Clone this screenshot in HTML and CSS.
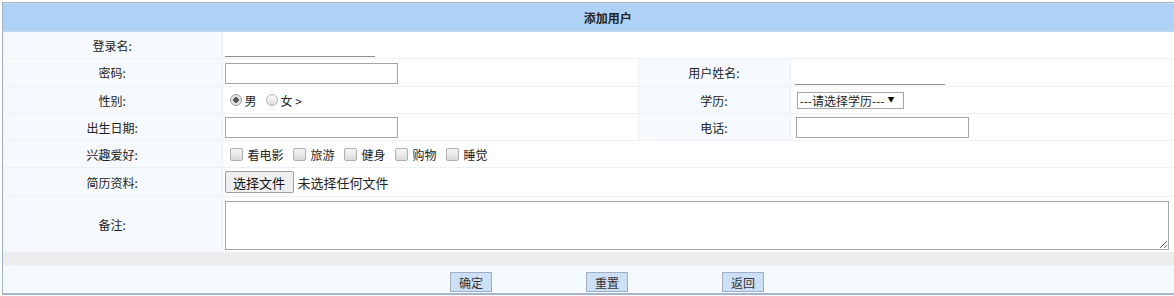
FILE: index.html
```html
<!DOCTYPE html>
<html lang="zh">
<head>
<meta charset="utf-8">
<title>添加用户</title>
<link rel="stylesheet" href="styles.css">
</head>
<body>
<div class="frame">
<table class="form">
  <colgroup>
    <col class="c1"><col class="c2"><col class="c3"><col class="c4">
  </colgroup>
  <tr class="head"><th colspan="4">添加用户</th></tr>
  <tr class="r1">
    <td class="lab">登录名:</td>
    <td class="val" colspan="3"><input class="line" type="text"></td>
  </tr>
  <tr class="r2">
    <td class="lab">密码:</td>
    <td class="val"><input class="box" type="password"></td>
    <td class="lab">用户姓名:</td>
    <td class="val right"><input class="line" type="text"></td>
  </tr>
  <tr class="r3">
    <td class="lab">性别:</td>
    <td class="val">
      <span class="opts">
        <label class="opt"><input type="radio" name="sex" checked>男</label>
        <label class="opt"><input type="radio" name="sex">女 &gt;</label>
      </span>
    </td>
    <td class="lab">学历:</td>
    <td class="val right">
      <span class="sel"><select><option>---请选择学历---</option></select><span class="arrow">▼</span></span>
    </td>
  </tr>
  <tr class="r4">
    <td class="lab">出生日期:</td>
    <td class="val"><input class="box" type="text"></td>
    <td class="lab">电话:</td>
    <td class="val right"><input class="box" type="text"></td>
  </tr>
  <tr class="r5">
    <td class="lab">兴趣爱好:</td>
    <td class="val" colspan="3">
      <span class="opts checks">
        <label class="chk"><input type="checkbox">看电影</label>
        <label class="chk"><input type="checkbox">旅游</label>
        <label class="chk"><input type="checkbox">健身</label>
        <label class="chk"><input type="checkbox">购物</label>
        <label class="chk"><input type="checkbox">睡觉</label>
      </span>
    </td>
  </tr>
  <tr class="r6">
    <td class="lab">简历资料:</td>
    <td class="val" colspan="3"><span class="file"><button type="button" class="filebtn">选择文件</button><span class="nofile">未选择任何文件</span></span></td>
  </tr>
  <tr class="r7">
    <td class="lab">备注:</td>
    <td class="val" colspan="3"><textarea class="note"></textarea></td>
  </tr>
  <tr class="gap"><td colspan="4"></td></tr>
  <tr class="actions">
    <td colspan="4">
      <div class="btns">
        <button type="button" class="btn">确定</button>
        <button type="button" class="btn">重置</button>
        <button type="button" class="btn">返回</button>
      </div>
    </td>
  </tr>
</table>
</div>
</body>
</html>
```
FILE: styles.css
```css
html, body {
  margin: 0;
  padding: 0;
  background: #fff;
  overflow: hidden;
}
body {
  font-family: "Noto Sans CJK SC", "Microsoft YaHei", sans-serif;
  font-size: 12px;
  color: #222;
}
.frame {
  margin: 2px 0 0 2px;
  width: 1180px;
  border: 1px solid #9fb3cc;
  border-right: none;
}
.form {
  width: 1180px;
  border-collapse: collapse;
  table-layout: fixed;
}
.c1 { width: 219px; }
.c2 { width: 416px; }
.c3 { width: 152px; }
.c4 { width: auto; }

.form td, .form th {
  padding: 0;
  border-bottom: 1px solid #edf1f6;
}
.head th {
  height: 27px;
  background: #aed1f6;
  border-top: 1px solid #c9dcf0;
  border-bottom: 1px solid #c5d9ee;
  font-weight: bold;
  font-size: 12px;
  text-align: center;
  padding-left: 30px;
  color: #222;
}
.lab {
  background: #f6faff;
  text-align: center;
  border-right: 1px solid #f0f0f0;
}
.val {
  background: #fff;
  padding-left: 2px !important;
  border-right: 1px solid #f0f0f0;
}
.r1 td { height: 26px; }
.r2 td { height: 27px; }
.r3 td { height: 26px; }
.r4 td { height: 26px; }
.r5 td { height: 26px; }
.r6 td { height: 28px; }
.r7 td { height: 55px; }

input.line {
  width: 150px;
  height: 18px;
  margin-top: 5px;
  border: none;
  border-bottom: 1px solid #8c8c8c;
  padding: 0;
  outline: none;
  display: block;
}
.right input.line { margin-left: 2px; }
input.box {
  width: 173px;
  height: 21px;
  box-sizing: border-box;
  border: 1px solid #a5a5a5;
  padding: 0;
  display: block;
  margin-top: 1px;
}
.right input.box { margin-left: 3px; }
.opts {
  display: flex;
  align-items: center;
}
.opt {
  display: inline-flex;
  align-items: center;
  margin-right: 3px;
}
.opt input {
  appearance: none;
  -webkit-appearance: none;
  box-sizing: border-box;
  margin: 0 3px 0 5px;
  width: 12px;
  height: 12px;
  border-radius: 50%;
  border: 1px solid #b4b4b4;
  background: linear-gradient(#fbfbfb, #dedede);
}
.opt input:checked {
  background: radial-gradient(circle, #555 0, #555 2.5px, #e6e6e6 3px, #dcdcdc 100%);
  border-color: #a0a0a0;
}
.opt + .opt input { margin-left: 6px; }
.checks .chk {
  display: inline-flex;
  align-items: center;
}
.chk input {
  appearance: none;
  -webkit-appearance: none;
  box-sizing: border-box;
  margin: 0 5px 0 5px;
  width: 13px;
  height: 13px;
  border: 1px solid #b0b0b0;
  border-radius: 2px;
  background: linear-gradient(#f7f7f7, #d9d9d9);
}
.chk + .chk input { margin-left: 9px; }

.sel {
  position: relative;
  display: inline-block;
  margin-left: 4px;
}
.sel select {
  appearance: none;
  -webkit-appearance: none;
  font-family: inherit;
  font-size: 12px;
  color: #222;
  width: 107px;
  height: 17px;
  border: 1px solid #a5a5a5;
  background: #fff;
  padding: 0 0 0 2px;
  line-height: 15px;
  display: block;
}
.sel .arrow {
  position: absolute;
  right: 9px;
  top: 0;
  font-size: 7px;
  line-height: 15px;
  color: #111;
  pointer-events: none;
}
.file {
  display: flex;
  align-items: center;
}
.filebtn {
  font-family: inherit;
  font-size: 13px;
  color: #111;
  height: 22px;
  width: 69px;
  padding: 0;
  background: #efefef;
  border: 1px solid #a0a0a0;
  border-radius: 2px;
}
.nofile {
  margin-left: 4px;
  font-size: 13px;
  color: #222;
}
textarea.note {
  display: block;
  width: 944px;
  height: 49px;
  box-sizing: border-box;
  border: 1px solid #a5a5a5;
  margin-top: 1px;
  resize: both;
}
.gap td {
  height: 12px;
  background: #ececec;
  border-bottom: 1px solid #f4f4f4;
}
.actions td {
  height: 27px;
  background: #f5faff;
  border-bottom: 1px solid #a9b8cf;
}
.btns {
  display: flex;
  padding-left: 447px;
  padding-top: 4px;
  gap: 94px;
  height: 23px;
  box-sizing: border-box;
}
.btn {
  font-family: inherit;
  font-size: 12px;
  color: #333;
  width: 42px;
  height: 20px;
  padding: 0;
  background: #cddff4;
  border: 1px solid #9fb0c6;
  border-radius: 0;
}
```
